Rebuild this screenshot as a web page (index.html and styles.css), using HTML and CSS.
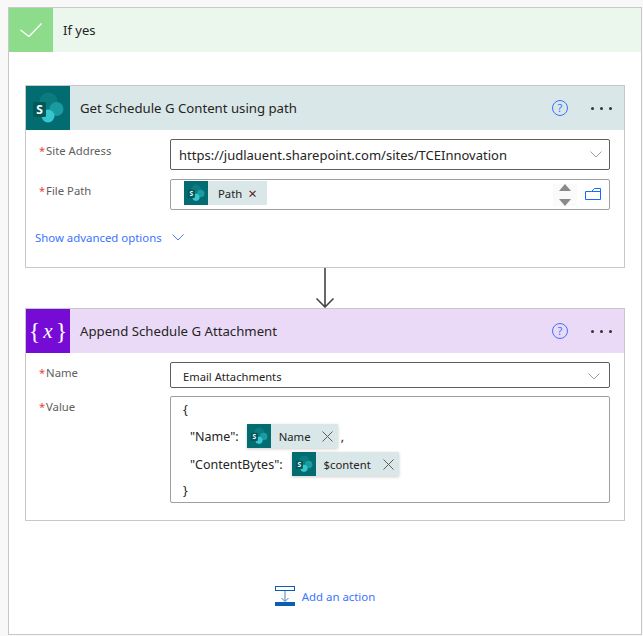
FILE: index.html
```html
<!DOCTYPE html>
<html lang="en">
<head>
	<meta charset="utf-8">
	<title>If yes</title>
	<link rel="stylesheet" href="styles.css">
</head>
<body>
	<div class="scope">
		<div class="scope-head">
			<div class="scope-icon">
				<svg width="22" height="14" viewBox="0 0 22 14"><path d="M.5 7l8.500 6.500L21.500.5" fill="none" stroke="#fff" stroke-width="1.300"/></svg>
			</div>
			<span class="scope-title">If yes</span>
		</div>
		<div class="scope-body">
			<div class="card">
				<div class="card-head head-sp">
					<div class="card-icon icon-sp">
						<svg width="44" height="44" viewBox="0 0 44 44">
							<circle cx="22.500" cy="15.500" r="9" fill="#0a7c80"/>
							<circle cx="30.500" cy="23" r="7" fill="#1a9ba1"/>
							<circle cx="22" cy="30" r="6.500" fill="#37c6d0"/>
							<rect x="7" y="16" width="13" height="15" rx="1.500" fill="#03585c"/>
							<text x="13.500" y="27.500" class="sp-letter">S</text>
						</svg>
					</div>
					<span class="card-title">Get Schedule G Content using path</span>
					<span class="help">?</span>
					<span class="more"><i></i><i></i><i></i></span>
				</div>
				<div class="card-body">
					<div class="row row-site">
						<label class="label"><em>*</em>Site Address</label>
						<div class="input input-dark site-input">
							<span>https://judlauent.sharepoint.com/sites/TCEInnovation</span>
							<svg width="12" height="7" viewBox="0 0 12 7"><path d="M.5.500L6 6 11.500.500" fill="none" stroke="#a19f9d"/></svg>
						</div>
					</div>
					<div class="row">
						<label class="label"><em>*</em>File Path</label>
						<div class="input file-input">
							<div class="chip chip-small">
								<svg width="24" height="24" viewBox="0 0 44 44" class="chip-icon">
									<circle cx="22.500" cy="15.500" r="9" fill="#0a7c80"/>
									<circle cx="30.500" cy="23" r="7" fill="#1a9ba1"/>
									<circle cx="22" cy="30" r="6.500" fill="#37c6d0"/>
									<rect x="7" y="16" width="13" height="15" rx="1.500" fill="#03585c"/>
									<text x="13.500" y="27.500" class="sp-letter">S</text>
								</svg>
								<span class="chip-text">Path</span>
								<span class="chip-x">×</span>
							</div>
							<div class="file-tools">
								<span class="spin">
									<i class="up"></i>
									<i class="down"></i>
								</span>
								<svg class="folder" width="16" height="12" viewBox="0 0 16 12"><path d="M.5 3.500h6l3-3h6v11H.5zM6.500 3.500h9" fill="none" stroke="#0f6cff"/></svg>
							</div>
						</div>
					</div>
					<div class="advanced">
						<span>Show advanced options</span>
						<svg width="12" height="7" viewBox="0 0 12 7"><path d="M.5.500L6 6 11.500.500" fill="none" stroke="#4a7dff"/></svg>
					</div>
				</div>
			</div>
			<div class="connector">
				<svg width="20" height="40" viewBox="0 0 20 40"><path d="M10 0v39M1.500 30.500L10 39l8.500-8.500" fill="none" stroke="#444" stroke-width="1.600"/></svg>
			</div>
			<div class="card">
				<div class="card-head head-var">
					<div class="card-icon icon-var"><span class="brace">{</span><span class="var-x">x</span><span class="brace">}</span></div>
					<span class="card-title">Append Schedule G Attachment</span>
					<span class="help">?</span>
					<span class="more"><i></i><i></i><i></i></span>
				</div>
				<div class="card-body card-body-var">
					<div class="row row-name">
						<label class="label"><em>*</em>Name</label>
						<div class="input input-dark name-input">
							<span>Email Attachments</span>
							<svg width="12" height="7" viewBox="0 0 12 7"><path d="M.5.500L6 6 11.500.500" fill="none" stroke="#a19f9d"/></svg>
						</div>
					</div>
					<div class="row">
						<label class="label"><em>*</em>Value</label>
						<div class="input value-input">
							<div class="code-line code-open">{</div>
							<div class="code-line code-prop">
								<span>"Name":</span>
								<div class="chip chip-name">
									<svg width="24" height="24" viewBox="0 0 44 44" class="chip-icon">
										<circle cx="22.500" cy="15.500" r="9" fill="#0a7c80"/>
										<circle cx="30.500" cy="23" r="7" fill="#1a9ba1"/>
										<circle cx="22" cy="30" r="6.500" fill="#37c6d0"/>
										<rect x="7" y="16" width="13" height="15" rx="1.500" fill="#03585c"/>
										<text x="13.500" y="27.500" class="sp-letter">S</text>
									</svg>
									<span class="chip-text">Name</span>
									<svg class="chip-close" width="11" height="11" viewBox="0 0 11 11"><path d="M.5.500l10 10M10.500.500l-10 10" stroke="#605e5c"/></svg>
								</div>
								<span class="comma">,</span>
							</div>
							<div class="code-line code-prop">
								<span>"ContentBytes":</span>
								<div class="chip chip-content">
									<svg width="24" height="24" viewBox="0 0 44 44" class="chip-icon">
										<circle cx="22.500" cy="15.500" r="9" fill="#0a7c80"/>
										<circle cx="30.500" cy="23" r="7" fill="#1a9ba1"/>
										<circle cx="22" cy="30" r="6.500" fill="#37c6d0"/>
										<rect x="7" y="16" width="13" height="15" rx="1.500" fill="#03585c"/>
										<text x="13.500" y="27.500" class="sp-letter">S</text>
									</svg>
									<span class="chip-text">$content</span>
									<svg class="chip-close" width="11" height="11" viewBox="0 0 11 11"><path d="M.5.500l10 10M10.500.500l-10 10" stroke="#605e5c"/></svg>
								</div>
							</div>
							<div class="code-line code-close">}</div>
						</div>
					</div>
				</div>
			</div>
			<div class="add-action">
				<svg width="20" height="20" viewBox="0 0 20 20">
					<rect x=".5" y=".5" width="19" height="4" fill="#fff" stroke="#0a5fb4"/>
					<path d="M10 5v10M6.500 12L10 15.500 13.500 12" fill="none" stroke="#4a80bd"/>
					<rect y="16" width="20" height="4" fill="#0a5fb4"/>
				</svg>
				<span>Add an action</span>
			</div>
		</div>
	</div>
</body>
</html>
```
FILE: styles.css
```css
*{
	margin: 0;
	padding: 0;
	box-sizing: border-box;
}
body{
	background-color: #f8f8f8;
	font-family: "Noto Sans", "Open Sans", sans-serif;
	font-size: 12px;
	color: #252423;
}
.sp-letter{
	font-size: 12px;
	font-weight: 700;
	fill: #fff;
	text-anchor: middle;
}
.scope{
	width: 634px;
	height: 628px;
	margin: 7px 0 0 8px;
	background-color: #fff;
	border: 1px solid #c8c8c8;
}
.scope-head{
	display: flex;
	align-items: center;
	height: 44px;
	background-color: #ebf6ed;
}
.scope-icon{
	display: flex;
	align-items: center;
	justify-content: center;
	width: 44px;
	height: 44px;
	background-color: #8cdc8c;
}
.scope-title{
	margin-left: 10px;
	font-size: 13px;
}
.scope-body{
	padding: 33px 16px 0;
}
.card{
	border: 1px solid #c8c8c8;
	background-color: #fff;
}
.card-head{
	display: flex;
	align-items: center;
	height: 44px;
}
.head-sp{
	background-color: #d9e7e8;
}
.head-var{
	background-color: #ebdaf7;
}
.card-icon{
	display: flex;
	align-items: center;
	justify-content: center;
	width: 44px;
	height: 44px;
	color: #fff;
}
.icon-sp{
	background-color: #036c70;
}
.icon-var{
	background-color: #770bd6;
	font-family: "Liberation Serif", serif;
}
.brace{
	font-size: 24px;
	line-height: 1;
}
.var-x{
	margin: 0 3px;
	font-size: 21px;
	font-style: italic;
	line-height: 1;
}
.card-title{
	flex: 1;
	margin-left: 10px;
	font-size: 13.2px;
}
.help{
	width: 16px;
	height: 16px;
	border: 1px solid #3b73ff;
	border-radius: 50%;
	color: #3b73ff;
	font-size: 11px;
	line-height: 14px;
	text-align: center;
}
.more{
	display: flex;
	gap: 6px;
	margin: 0 12px 0 23px;
}
.more i{
	width: 3px;
	height: 3px;
	border-radius: 50%;
	background-color: #333;
}
.card-body{
	height: 137px;
	padding: 9px 14px 0 13px;
}
.card-body-var{
	height: 167px;
}
.card-body-var .label{
	padding-top: 3px;
}
.row{
	display: flex;
	align-items: flex-start;
}
.row-site{
	margin-bottom: 9px;
}
.row-name{
	margin-bottom: 8px;
}
.label{
	width: 131px;
	padding-top: 4px;
	color: #605e5c;
	font-size: 11.3px;
}
.label em{
	margin-right: 1px;
	color: #e0443e;
	font-size: 11px;
	font-style: normal;
}
.input{
	flex: 1;
	display: flex;
	align-items: center;
	border: 1px solid #a19f9d;
	border-radius: 2px;
}
.input-dark{
	border-color: #605e5c;
}
.site-input{
	height: 31px;
	padding: 0 7px 0 8px;
	font-size: 13px;
	justify-content: space-between;
}
.name-input{
	height: 26px;
	padding: 2px 9px 0 12px;
	font-size: 11.2px;
	justify-content: space-between;
}
.file-input{
	height: 31px;
	padding: 1px 8px 0 13px;
	justify-content: space-between;
	align-items: flex-start;
}
.chip{
	display: flex;
	align-items: center;
	height: 24px;
	background-color: #d9e7e8;
	font-size: 11.3px;
}
.chip-icon{
	background-color: #036c70;
}
.chip-small{
	width: 83px;
}
.chip-small .chip-text{
	margin-left: 10px;
}
.chip-x{
	margin-left: 6px;
	color: #5a1a1a;
	font-size: 15px;
	line-height: 1;
}
.file-tools{
	display: flex;
	align-items: center;
	gap: 8px;
	height: 28px;
}
.folder{
	margin-bottom: 3px;
}
.spin{
	display: flex;
	flex-direction: column;
	gap: 8px;
	padding: 0 6px;
	background-color: #fafafa;
}
.spin i{
	width: 0;
	height: 0;
	border-left: 6px solid transparent;
	border-right: 6px solid transparent;
}
.spin .up{
	border-bottom: 7px solid #8a8a8a;
}
.spin .down{
	border-top: 7px solid #8a8a8a;
}
.advanced{
	display: flex;
	align-items: center;
	gap: 10px;
	margin-top: 20px;
	margin-left: -4px;
	color: #3b73ff;
	font-size: 11.4px;
}
.connector{
	display: flex;
	justify-content: center;
	height: 40px;
}
.value-input{
	display: block;
	height: 107px;
	padding: 0 12px;
	font-size: 12.5px;
}
.code-line{
	display: flex;
	align-items: center;
	height: 28px;
}
.code-open{
	height: 25px;
}
.code-close{
	height: 24px;
}
.code-prop{
	padding-left: 7px;
	gap: 4px;
}
.chip-name,
.chip-content{
	box-shadow: 0 1px 3px rgba(0, 0, 0, .2);
}
.chip-name{
	width: 91px;
	margin-left: 4px;
}
.chip-content{
	width: 107px;
	margin-left: 5px;
}
.chip-name .chip-text,
.chip-content .chip-text{
	flex: 1;
	margin-left: 8px;
}
.chip-close{
	margin-right: 5px;
}
.comma{
	margin-left: -1px;
}
.add-action{
	display: flex;
	align-items: center;
	justify-content: center;
	gap: 7px;
	margin-top: 65px;
	color: #3b73ff;
	font-size: 11.4px;
}
```
